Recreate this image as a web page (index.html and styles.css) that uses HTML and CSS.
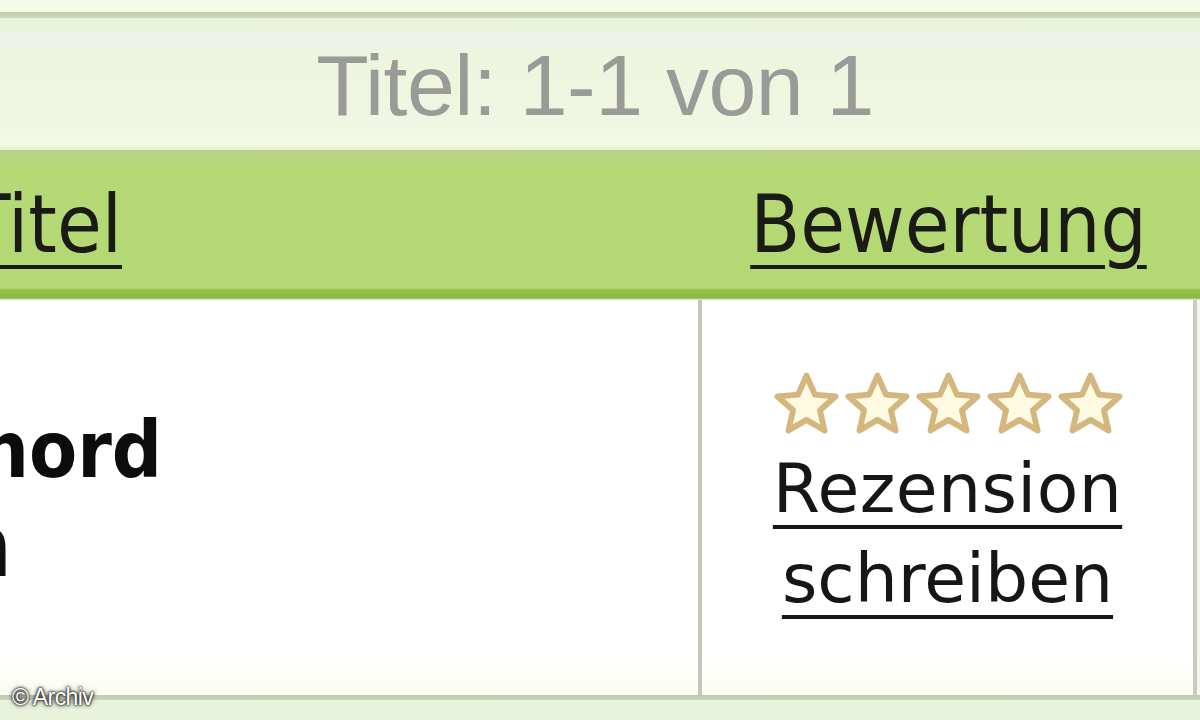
FILE: index.html
```html
<!DOCTYPE html>
<html lang="de">
<head>
<meta charset="utf-8">
<title>Titel: 1-1 von 1</title>
<link rel="stylesheet" href="styles.css">
</head>
<body>
<div class="page">
  <div class="top-strip"></div>
  <div class="top-line"></div>
  <div class="pager">
    <div class="pager-hi"></div>
    <div class="pager-text">Titel: 1-1 von 1</div>
  </div>
  <div class="head-row">
    <div class="head-left">
      <div class="clip-end head-end"><a class="head-link" href="#">Titel</a></div>
    </div>
    <div class="head-right"><a class="head-link" href="#">Bewertung</a></div>
    <div class="head-rest"></div>
  </div>
  <div class="body-row">
    <div class="cell-left">
      <div class="clip-end line-end-1"><span class="book-title">Tatort Hochnord</span></div>
      <div class="clip-end line-end-2"><span class="book-sub">Kriminalroman</span></div>
    </div>
    <div class="cell-right">
      <div class="stars">
        <svg class="star" viewBox="0 0 24 24"><path d="M12 2.6l2.85 6.4 6.95.65-5.25 4.65 1.55 6.85L12 17.55 5.9 21.15l1.55-6.85L2.2 9.65l6.95-.65z"/></svg>
        <svg class="star" viewBox="0 0 24 24"><path d="M12 2.6l2.85 6.4 6.95.65-5.25 4.65 1.55 6.85L12 17.55 5.9 21.15l1.55-6.85L2.2 9.65l6.95-.65z"/></svg>
        <svg class="star" viewBox="0 0 24 24"><path d="M12 2.6l2.85 6.4 6.95.65-5.25 4.65 1.55 6.85L12 17.55 5.9 21.15l1.55-6.85L2.2 9.65l6.95-.65z"/></svg>
        <svg class="star" viewBox="0 0 24 24"><path d="M12 2.6l2.85 6.4 6.95.65-5.25 4.65 1.55 6.85L12 17.55 5.9 21.15l1.55-6.85L2.2 9.65l6.95-.65z"/></svg>
        <svg class="star" viewBox="0 0 24 24"><path d="M12 2.6l2.85 6.4 6.95.65-5.25 4.65 1.55 6.85L12 17.55 5.9 21.15l1.55-6.85L2.2 9.65l6.95-.65z"/></svg>
      </div>
      <a class="review-link" href="#"><span class="rz">Rezension</span><br>schreiben</a>
    </div>
    <div class="cell-rest"></div>
  </div>
  <div class="bottom-line"></div>
  <div class="bottom-band"></div>
  <div class="copyright">© Archiv</div>
</div>
</body>
</html>
```

FILE: styles.css
```css
html, body {
  margin: 0;
  padding: 0;
}
body {
  width: 1200px;
  height: 720px;
  overflow: hidden;
  background: #eef5e2;
  font-family: "DejaVu Sans", Verdana, sans-serif;
}
.page {
  position: relative;
  width: 1200px;
  height: 720px;
  overflow: hidden;
  display: flex;
  flex-direction: column;
}
.top-strip {
  height: 12px;
  background: #f6fbe9;
}
.top-line {
  height: 6px;
  background: linear-gradient(#bfcaa9, #cfd8c0);
}
.pager {
  height: 132px;
  background: linear-gradient(#e9f3d8 0px, #e9f3d8 12px, #eef1ea 14px, #eef1ea 28px, #edf5df 32px, #eff7e2 110px, #f2f9e6 126px, #e4f0cd 132px);
  display: flex;
  flex-direction: column;
}
.pager-hi {
  height: 24px;
}
.pager-text {
  font-family: "Liberation Sans", Arial, sans-serif;
  font-size: 86px;
  line-height: 86px;
  color: #9a9a97;
  text-align: center;
  padding-right: 10px;
  letter-spacing: -0.5px;
}
.head-row {
  height: 150px;
  box-sizing: border-box;
  display: flex;
  background: linear-gradient(#bccd8c 0px, #b7d67c 10px, #b5d975 20px, #b4d874 138px, #93bf4a 140px, #8bb842 148px, #eef7de 150px);
}
.head-left {
  width: 702px;
  padding-top: 27px;
  box-sizing: border-box;
}
.head-right {
  width: 493px;
  padding-top: 27px;
  box-sizing: border-box;
  text-align: center;
}
.head-rest {
  flex: 1;
}
.head-link {
  font-family: "DejaVu Sans Condensed", "DejaVu Sans", sans-serif;
  font-stretch: condensed;
  font-size: 81px;
  line-height: 94px;
  color: #1a1a16;
  text-decoration: underline;
  text-decoration-thickness: 4px;
  text-underline-offset: 13px;
  white-space: nowrap;
}
.clip-end {
  display: flex;
  justify-content: flex-end;
  white-space: nowrap;
}
.head-end {
  width: 122px;
}
.body-row {
  height: 395px;
  display: flex;
  background: linear-gradient(#ffffff 0px, #ffffff 360px, #fbfdee 395px);
}
.cell-left {
  width: 698px;
  border-right: 4px solid #c5c7bd;
  padding-top: 102px;
  box-sizing: content-box;
}
.line-end-1 {
  width: 162px;
  height: 96px;
}
.line-end-2 {
  width: 12px;
  height: 96px;
}
.book-title {
  font-family: "DejaVu Sans Condensed", "DejaVu Sans", sans-serif;
  font-stretch: condensed;
  font-weight: bold;
  font-size: 78px;
  line-height: 96px;
  color: #0c0c0c;
}
.book-sub {
  font-family: "DejaVu Sans Condensed", "DejaVu Sans", sans-serif;
  font-stretch: condensed;
  font-size: 86px;
  line-height: 96px;
  color: #111111;
}
.cell-right {
  width: 491px;
  border-right: 4px solid #c9cbc0;
  padding-top: 68px;
  display: flex;
  flex-direction: column;
  align-items: center;
}
.cell-rest {
  flex: 1;
  background: #f4f6ee;
}
.stars {
  display: flex;
  height: 71px;
  margin-bottom: 5px;
  margin-left: 2px;
}
.star {
  width: 71px;
  height: 71px;
  display: block;
}
.star path {
  fill: #fffbe2;
  stroke: #d3b77e;
  stroke-width: 2;
  stroke-linejoin: round;
}
.review-link {
  font-family: "DejaVu Sans", Verdana, sans-serif;
  font-size: 68px;
  line-height: 90px;
  color: #161616;
  text-align: center;
  text-decoration: underline;
  text-decoration-thickness: 4px;
  text-underline-offset: 13px;
  white-space: nowrap;
}
.rz {
  letter-spacing: 0.4px;
}
.bottom-line {
  height: 5px;
  background: linear-gradient(#c2c8b0, #ccd2bd);
}
.bottom-band {
  flex: 1;
  background: #e9f2db;
}
.copyright {
  position: absolute;
  left: 12px;
  top: 684px;
  font-family: "Liberation Sans", Arial, sans-serif;
  font-size: 23px;
  line-height: 26px;
  color: #ffffff;
  letter-spacing: -0.6px;
  text-shadow: 0 0 2px #111, 0 0 3px #222, 0 0 5px #333;
}
```
